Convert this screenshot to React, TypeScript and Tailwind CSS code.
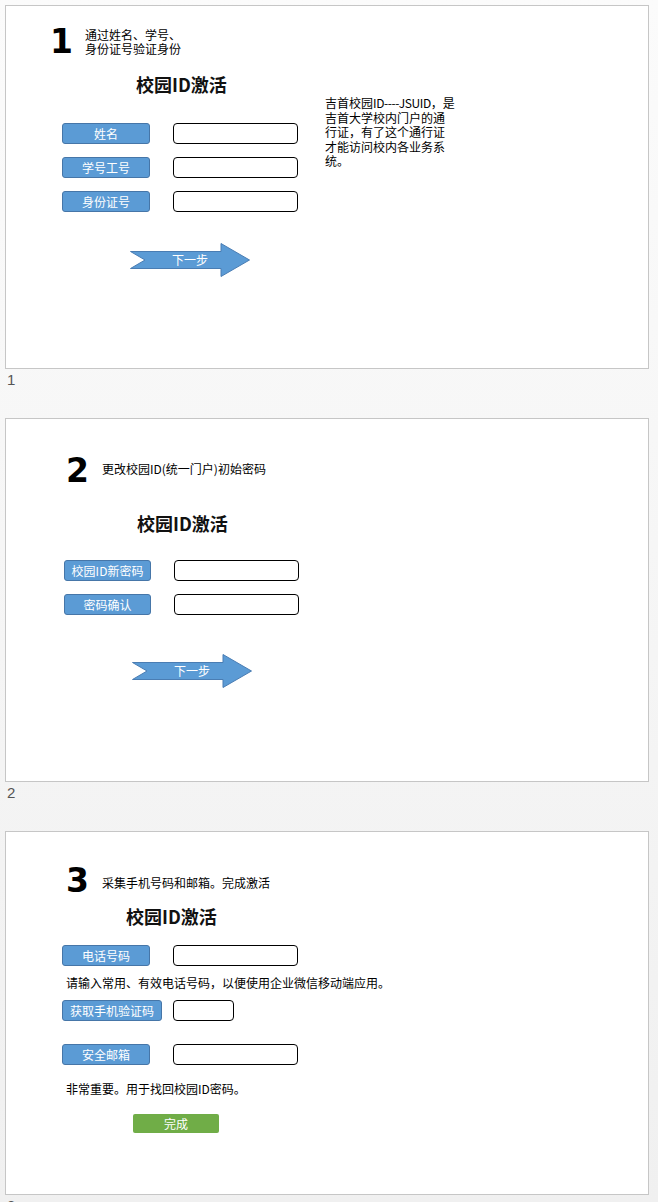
import React from "react";

function Tag({ className = "", children }: { className?: string; children: React.ReactNode }) {
  return (
    <div
      className={`flex h-[21px] items-center justify-center rounded-[3px] border border-[#4676a8] bg-[#5b9bd5] text-[12px] leading-none text-white ${className}`}
    >
      {children}
    </div>
  );
}

function Field({ className = "" }: { className?: string }) {
  return <div className={`h-[21px] rounded-[4px] border border-black bg-white ${className}`} />;
}

function Arrow({ className = "" }: { className?: string }) {
  return (
    <div className={`relative h-[34px] w-[120px] ${className}`}>
      <svg className="absolute inset-0" width="120" height="34" viewBox="0 0 120 34">
        <polygon
          points="0.5,8.5 91,8.5 91,0.5 119.5,17 91,33.5 91,25.5 0.5,25.5 15,17"
          fill="#5b9bd5"
          stroke="#4a7db3"
          strokeWidth="1"
        />
      </svg>
      <span className="relative flex h-full w-full items-center justify-center text-[12px] leading-none text-white">
        下一步
      </span>
    </div>
  );
}

function Footer({ n }: { n: string }) {
  return (
    <div className="h-[49px] pl-[2px] pt-[3px] font-['Liberation_Sans',sans-serif] text-[15px] leading-[15px] text-[#555]">
      {n}
    </div>
  );
}

const num = "font-['DejaVu_Sans',sans-serif] text-[33px] font-bold leading-[33px] text-black";
const title = "text-[18px] font-bold leading-[18px] text-[#111]";

export default function App() {
  return (
    <div className="h-[1202px] w-[658px] overflow-hidden bg-linear-to-b from-[#fbfbfb] to-[#f0f0f0] pl-[5px] pt-[5px] font-['Noto_Sans_CJK_SC',sans-serif] text-black">
      {/* Slide 1 */}
      <div className="h-[364px] w-[644px] border border-[#c6c6c6] bg-white">
        <div className="flex">
          <div className="w-[310px]">
            <div className="mt-[19px] flex items-start">
              <span className={`ml-[44px] w-[35px] ${num}`}>1</span>
              <p className="mt-[2.5px] text-[12px] leading-[14px]">
                通过姓名、学号、
                <br />
                身份证号验证身份
              </p>
            </div>
            <h2 className={`ml-[130px] mt-[17px] ${title}`}>校园ID激活</h2>
            <div className="mt-[30px] flex flex-col gap-[13px]">
              <div className="flex">
                <Tag className="ml-[56px] w-[88px]">姓名</Tag>
                <Field className="ml-[23px] w-[125px]" />
              </div>
              <div className="flex">
                <Tag className="ml-[56px] w-[88px]">学号工号</Tag>
                <Field className="ml-[23px] w-[125px]" />
              </div>
              <div className="flex">
                <Tag className="ml-[56px] w-[88px]">身份证号</Tag>
                <Field className="ml-[23px] w-[125px]" />
              </div>
            </div>
            <Arrow className="ml-[124px] mt-[31px]" />
          </div>
          <p className="ml-[9px] mt-[90px] text-[12px] leading-[14.5px]">
            吉首校园<span className="tracking-[-0.4px]">ID----JSUID</span>，是
            <br />
            吉首大学校内门户的通
            <br />
            行证，有了这个通行证
            <br />
            才能访问校内各业务系
            <br />
            统。
          </p>
        </div>
      </div>
      <Footer n="1" />

      {/* Slide 2 */}
      <div className="h-[364px] w-[644px] border border-[#c6c6c6] bg-white">
        <div className="mt-[35px] flex items-start">
          <span className={`ml-[60px] w-[36px] ${num}`}>2</span>
          <p className="mt-[7.5px] text-[12px] leading-[14px]">更改校园ID(统一门户)初始密码</p>
        </div>
        <h2 className={`ml-[131px] mt-[27px] ${title}`}>校园ID激活</h2>
        <div className="mt-[28px] flex flex-col gap-[13px]">
          <div className="flex">
            <Tag className="ml-[58px] w-[87px]">校园ID新密码</Tag>
            <Field className="ml-[23px] w-[125px]" />
          </div>
          <div className="flex">
            <Tag className="ml-[58px] w-[87px]">密码确认</Tag>
            <Field className="ml-[23px] w-[125px]" />
          </div>
        </div>
        <Arrow className="ml-[126px] mt-[39px]" />
      </div>
      <Footer n="2" />

      {/* Slide 3 */}
      <div className="h-[364px] w-[644px] border border-[#c6c6c6] bg-white">
        <div className="mt-[32px] flex items-start">
          <span className={`ml-[60px] w-[36px] ${num}`}>3</span>
          <p className="mt-[11.5px] text-[12px] leading-[14px]">采集手机号码和邮箱。完成激活</p>
        </div>
        <h2 className={`ml-[120px] mt-[10px] ${title}`}>校园ID激活</h2>
        <div className="mt-[20px] flex">
          <Tag className="ml-[56px] w-[88px]">电话号码</Tag>
          <Field className="ml-[23px] w-[125px]" />
        </div>
        <p className="ml-[60px] mt-[9.5px] text-[12px] leading-[14px]">
          请输入常用、有效电话号码，以便使用企业微信移动端应用。
        </p>
        <div className="mt-[10.5px] flex">
          <Tag className="ml-[56px] w-[100px]">获取手机验证码</Tag>
          <Field className="ml-[11px] w-[61px]" />
        </div>
        <div className="mt-[23px] flex">
          <Tag className="ml-[56px] w-[88px]">安全邮箱</Tag>
          <Field className="ml-[23px] w-[125px]" />
        </div>
        <p className="ml-[60px] mt-[17px] text-[12px] leading-[14px]">非常重要。用于找回校园ID密码。</p>
        <div className="ml-[127px] mt-[18px] flex h-[19px] w-[86px] items-center justify-center rounded-[2px] bg-[#70ad47] text-[12px] leading-none text-white">
          完成
        </div>
      </div>
      <Footer n="3" />
    </div>
  );
}
